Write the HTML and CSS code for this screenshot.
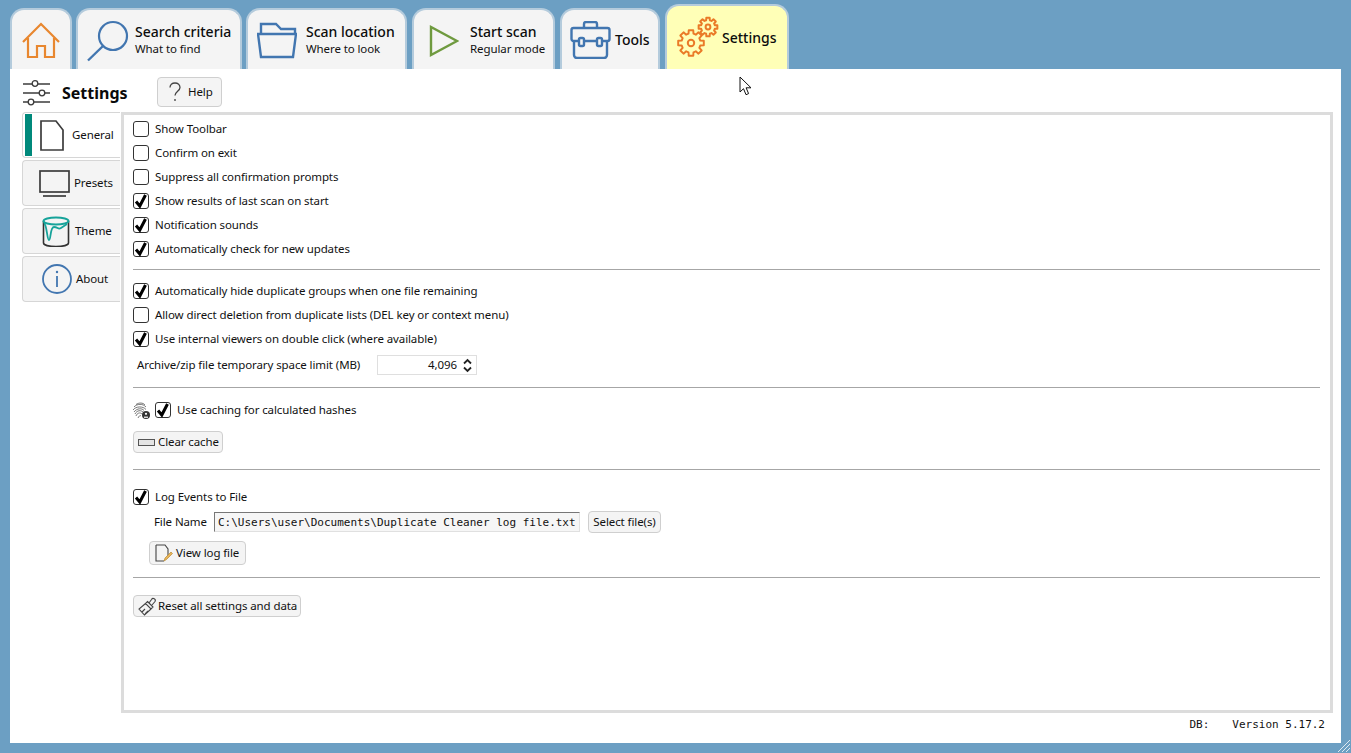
FILE: index.html
```html
<!DOCTYPE html>
<html lang="en">
<head>
<meta charset="utf-8">
<title>Settings</title>
<link rel="stylesheet" href="styles.css">
</head>
<body>
<div class="window">
  <nav class="tabbar">
    <div class="tab tab-home">
      <svg width="38" height="38" viewBox="0 0 38 38" fill="none" stroke="#e8872f" stroke-width="2.2"><path d="M1 20 19 2l18 18M6 16v19h9V24h8v11h9V16"/></svg>
    </div>
    <div class="tab tab-search">
      <svg width="42" height="42" viewBox="0 0 42 42" fill="none" stroke="#4276b0" stroke-width="2.2"><circle cx="26" cy="16" r="14"/><path d="M16 26 1 40.500" stroke-width="2.400"/></svg>
      <div class="tab-text"><b>Search criteria</b><span>What to find</span></div>
    </div>
    <div class="tab tab-scan">
      <svg width="40" height="37" viewBox="0 0 40 37" fill="none" stroke="#4276b0" stroke-width="2.4"><path d="M4 11V2h15l5 5h14v4M1 12h38l-3 23H4z"/></svg>
      <div class="tab-text"><b>Scan location</b><span>Where to look</span></div>
    </div>
    <div class="tab tab-start">
      <svg width="30" height="32" viewBox="0 0 30 32" fill="none" stroke="#6f9a3f" stroke-width="2.400"><path d="M2 2v28l26-14z"/></svg>
      <div class="tab-text"><b>Start scan</b><span>Regular mode</span></div>
    </div>
    <div class="tab tab-tools">
      <svg width="41" height="38" viewBox="0 0 41 38" fill="none" stroke="#4276b0" stroke-width="2.400" stroke-linejoin="round"><path d="M14 7V3a2 2 0 0 1 2-2h9a2 2 0 0 1 2 2v4"/><rect x="1.500" y="7" width="38" height="13" rx="2"/><path d="M4 20v14a3 3 0 0 0 3 3h27a3 3 0 0 0 3-3V20"/><rect x="9" y="17" width="5" height="8" rx="1.500" fill="#f4f4f4"/><rect x="27" y="17" width="5" height="8" rx="1.500" fill="#f4f4f4"/></svg>
      <b class="tab-label">Tools</b>
    </div>
    <div class="tab tab-settings">
      <svg width="42" height="41" viewBox="0 0 42 41" fill="none" stroke="#ea7a27" stroke-linejoin="round">
        <defs><path id="gear" d="M7.150-1.920 9.850-1.740 9.850 1.740 7.150 1.920 6.410 3.700 8.190 5.740 5.740 8.190 3.700 6.410 1.920 7.150 1.740 9.850-1.740 9.850-1.920 7.150-3.700 6.410-5.740 8.190-8.190 5.740-6.410 3.700-7.150 1.920-9.850 1.740-9.850-1.740-7.150-1.920-6.410-3.700-8.190-5.740-5.740-8.190-3.700-6.410-1.920-7.150-1.740-9.850 1.740-9.850 1.920-7.150 3.700-6.410 5.740-8.190 8.190-5.740 6.410-3.700Z"/></defs>
        <use href="#gear" transform="translate(14 27) scale(1.300)" stroke-width="1.500"/>
        <circle cx="14" cy="27" r="3.200" stroke-width="2"/>
        <use href="#gear" transform="translate(31 11) scale(.95)" stroke-width="2.100"/>
        <circle cx="31" cy="11" r="2.400" stroke-width="2"/>
      </svg>
      <b class="tab-label">Settings</b>
    </div>
  </nav>

  <main class="content">
    <header class="page-head">
      <svg class="head-icon" width="27" height="27" viewBox="0 0 27 27" fill="none" stroke="#3c3c3c" stroke-width="1.300"><path d="M0 5h27M0 14h27M0 23h27"/><circle cx="12" cy="4.500" r="2.800" fill="#fff"/><circle cx="19" cy="14" r="2.800" fill="#fff"/><circle cx="8" cy="23" r="2.800" fill="#fff"/></svg>
      <h1 class="page-title">Settings</h1>
      <button class="btn btn-help">
        <svg width="12" height="20" viewBox="0 0 12 20" fill="none" stroke="#444" stroke-width="1.300"><path d="M1 5.500C1 3 3 1 6 1s5 2 5 4.500c0 3.500-5 4-5 8"/><circle cx="6" cy="18" r=".9" fill="#444" stroke="none"/></svg>
        <span>Help</span>
      </button>
    </header>

    <div class="body">
      <aside class="side">
        <div class="side-tab active">
          <svg class="ic-general" width="24" height="31" viewBox="0 0 24 31" fill="none" stroke="#3c3c3c" stroke-width="1.700"><path d="M1 1h15l7 9v20H1z"/></svg>
          <span class="lbl-general">General</span>
        </div>
        <div class="side-tab">
          <svg class="ic-presets" width="31" height="27" viewBox="0 0 31 27" fill="none" stroke="#3c3c3c" stroke-width="1.700"><rect x="1" y="1" width="29" height="21"/><path d="M4 26h23"/></svg>
          <span class="lbl-presets">Presets</span>
        </div>
        <div class="side-tab">
          <svg class="ic-theme" width="28" height="31" viewBox="0 0 28 31" fill="none"><path d="M1.500 5v22c0 2 5.500 3.500 12.500 3.500s12.500-1.500 12.500-3.500V5" stroke="#333" stroke-width="1.600"/><ellipse cx="14" cy="5" rx="12.500" ry="3.500" stroke="#16a39a" stroke-width="2"/><path d="M2 7c3 2 3 17 5 17s1-13 5-13 4 3 7 1 6-4 6-4" stroke="#16a39a" stroke-width="1.800"/></svg>
          <span class="lbl-theme">Theme</span>
        </div>
        <div class="side-tab">
          <svg class="ic-about" width="30" height="30" viewBox="0 0 30 30" fill="none"><circle cx="15" cy="15" r="14" stroke="#4276b0" stroke-width="1.800"/><path d="M15 12v11" stroke="#4276b0" stroke-width="1.800"/><circle cx="15" cy="8" r="1.200" fill="#4276b0"/></svg>
          <span class="lbl-about">About</span>
        </div>
      </aside>

      <section class="panel">
        <label class="row"><span class="cb"></span>Show Toolbar</label>
        <label class="row"><span class="cb"></span>Confirm on exit</label>
        <label class="row"><span class="cb"></span>Suppress all confirmation prompts</label>
        <label class="row"><span class="cb on"><svg viewBox="0 0 16 16"><path d="M3 8.500 6.800 13 12.500 2"/></svg></span>Show results of last scan on start</label>
        <label class="row"><span class="cb on"><svg viewBox="0 0 16 16"><path d="M3 8.500 6.800 13 12.500 2"/></svg></span>Notification sounds</label>
        <label class="row"><span class="cb on"><svg viewBox="0 0 16 16"><path d="M3 8.500 6.800 13 12.500 2"/></svg></span>Automatically check for new updates</label>
        <hr class="sep sep-1">
        <label class="row"><span class="cb on"><svg viewBox="0 0 16 16"><path d="M3 8.500 6.800 13 12.500 2"/></svg></span>Automatically hide duplicate groups when one file remaining</label>
        <label class="row"><span class="cb"></span>Allow direct deletion from duplicate lists (DEL key or context menu)</label>
        <label class="row"><span class="cb on"><svg viewBox="0 0 16 16"><path d="M3 8.500 6.800 13 12.500 2"/></svg></span>Use internal viewers on double click (where available)</label>
        <div class="spin-row">
          <span class="spin-label">Archive/zip file temporary space limit (MB)</span>
          <div class="spin">
            <span class="spin-val">4,096</span>
            <svg width="9" height="15" viewBox="0 0 9 15" fill="none" stroke="#222" stroke-width="1.800"><path d="M1 5.500 4.500 2 8 5.500M1 9.500 4.500 13 8 9.500"/></svg>
          </div>
        </div>
        <hr class="sep sep-2">
        <label class="row row-cache">
          <svg class="fp" width="17" height="17" viewBox="0 0 17 17" fill="none" stroke="#555" stroke-width=".8"><path d="M3 2.500c3-2 7-2 9 .5M1 5c3-3.500 9-3.500 12 0M0 8c3-4 10-4 13-.5M1 10c3-4 8-4 10-1.500M2 12c2-4 6-4 8-2M3 14c1-3 4-4 6-2M5 16c1-2 2-3 3-2"/><circle cx="13" cy="13" r="4" fill="#333" stroke="none"/><circle cx="13" cy="11.800" r="1.100" fill="#fff" stroke="none"/><path d="M11 15.200h4" stroke="#fff" stroke-width="1.200"/></svg>
          <span class="cb on"><svg viewBox="0 0 16 16"><path d="M3 8.500 6.800 13 12.500 2"/></svg></span>Use caching for calculated hashes
        </label>
        <button class="btn btn-clear">
          <svg width="17" height="7" viewBox="0 0 17 7" fill="none" stroke="#555"><rect x=".5" y=".5" width="16" height="6" fill="#e4e4e4"/></svg>
          <span>Clear cache</span>
        </button>
        <hr class="sep sep-3">
        <label class="row row-log"><span class="cb on"><svg viewBox="0 0 16 16"><path d="M3 8.500 6.800 13 12.500 2"/></svg></span>Log Events to File</label>
        <div class="file-row">
          <span class="file-label">File Name</span>
          <div class="file-input">C:\Users\user\Documents\Duplicate Cleaner log file.txt</div>
          <button class="btn btn-select"><span>Select file(s)</span></button>
        </div>
        <button class="btn btn-view">
          <svg width="18" height="18" viewBox="0 0 18 18" fill="none"><path d="M1 1h9l3 4v7M9 17H1V1" stroke="#444" stroke-width="1.100"/><path d="M9 17l1-3 6-6 1.500 1.500-6 6z" fill="#e6b45a" stroke="#b98a35" stroke-width=".7"/></svg>
          <span>View log file</span>
        </button>
        <hr class="sep sep-4">
        <button class="btn btn-reset">
          <svg width="19" height="19" viewBox="0 0 19 19" fill="none" stroke="#444" stroke-width="1.100"><path d="M11 6l2.500-3.500a2 2 0 0 1 3.500 2L14 8M9.500 4.500l5.500 5.500-2 2L7.500 6.500zM7.500 6.500 1 12l5.500 6 6.500-6M4 15l3-3M7 17l3-3"/></svg>
          <span>Reset all settings and data</span>
        </button>
      </section>
    </div>

    <footer class="status">
      <span>DB:</span><span>Version 5.17.2</span>
    </footer>
  </main>

  <svg class="cursor" width="14" height="20" viewBox="0 0 14 20"><path d="M1 1v15l3.500-3.300 2.500 6 2.600-1.100-2.500-5.800H12z" fill="#fff" stroke="#111" stroke-width="1"/></svg>
  <svg class="grip" width="14" height="14" viewBox="0 0 14 14" stroke="#dfe9f1" stroke-width="1"><path d="M13 1 1 13M13 5 5 13M13 9 9 13"/></svg>
</div>
</body>
</html>
```

FILE: styles.css
```css
* { box-sizing: border-box; }
html, body { margin: 0; height: 100%; }
body {
  background: #6c9fc3;
  font-family: "Noto Sans", "Open Sans", sans-serif;
  font-size: 11.5px;
  letter-spacing: -0.1px;
  color: #111;
  overflow: hidden;
}
.window { position: relative; width: 1351px; height: 753px; padding: 0 10px 10px; display: flex; flex-direction: column; }

/* tabs */
.tabbar { display: flex; align-items: flex-end; gap: 4px; height: 69px; flex: none; }
.tab {
  height: 61px;
  display: flex;
  align-items: center;
  background: #f4f4f4;
  border: 2px solid #b4cbdc;
  border-bottom: 0;
  border-radius: 14px 14px 0 0;
}
.tab-home { width: 62px; justify-content: center; padding-top: 2px; }
.tab-search { width: 166px; padding-left: 9px; gap: 6px; padding-top: 2px; }
.tab-scan { width: 161px; padding-left: 9px; gap: 9px; padding-top: 2px; }
.tab-start { width: 143px; padding-left: 15px; gap: 11px; margin-left: 1px; padding-top: 2px; }
.tab-tools { width: 100px; padding-left: 8px; gap: 4px; margin-left: 1px; }
.tab-settings { width: 124px; height: 65px; margin-left: 1px; background: #ffffb7; padding-left: 10px; gap: 3px; padding-bottom: 2px; }
.tab-settings .tab-label { padding-top: 2px; }
.tab-text { display: flex; flex-direction: column; line-height: 17px; padding-bottom: 2px; }
.tab-text b, .tab-label { font-weight: 500; font-size: 14px; letter-spacing: 0; color: #0c0c0c; }
.tab-text span { font-size: 11.5px; }

/* content */
.content { flex: 1; background: #fff; display: flex; flex-direction: column; padding-left: 12px; min-height: 0; }
.page-head { height: 43px; display: flex; align-items: center; flex: none; padding-top: 3px; }
.head-icon { margin: 0 0 0 1px; }
.page-title { margin: 2px 0 0 12px; font-size: 16px; font-weight: 700; letter-spacing: 0; width: 95px; color: #0a0a0a; }
.btn {
  display: inline-flex;
  align-items: center;
  font: inherit;
  letter-spacing: inherit;
  white-space: nowrap;
  color: #111;
  background: #f4f4f4;
  border: 1px solid #cfcfcf;
  border-radius: 4px;
  padding: 0;
}
.btn span, .side-tab span, .spin-label, .spin-val, .file-label { padding-bottom: 2px; }
.btn-help { width: 65px; height: 30px; padding-left: 11px; gap: 7px; }

.body { flex: 1; display: flex; min-height: 0; }
.side { width: 99px; flex: none; display: flex; flex-direction: column; gap: 2px; }
.side-tab {
  height: 46px;
  width: 98px;
  display: flex;
  align-items: center;
  background: #f4f4f4;
  border: 1px solid #d6d6d6;
  border-right: 0;
  border-radius: 4px 0 0 4px;
}
.side-tab.active { background: #fff; }
.side-tab.active::before { content: ""; flex: none; align-self: stretch; width: 7px; margin: 1px 0 1px 2px; background: #00897b; }
.ic-general { margin-left: 8px; }
.lbl-general { margin-left: 8px; }
.ic-presets { margin-left: 16px; }
.lbl-presets { margin-left: 4px; }
.ic-theme { margin-left: 19px; }
.lbl-theme { margin-left: 5px; }
.ic-about { margin-left: 19px; }
.lbl-about { margin-left: 4px; }

.panel {
  width: 1212px;
  height: 601px;
  flex: none;
  border: 3px solid #dcdcdc;
  padding: 2px 9px 0 9px;
  display: flex;
  flex-direction: column;
  align-items: flex-start;
}
.row { display: flex; align-items: center; height: 24px; flex: none; padding-bottom: 2px; }
.cb {
  width: 16px; height: 16px;
  border: 1.500px solid #333;
  border-radius: 3px;
  background: #fff;
  margin: 2px 6px 0 0;
  flex: none;
}
.row-cache .fp { margin: 2px 5px 0 0; flex: none; }
.cb svg { display: block; width: 16px; height: 16px; margin: -1.500px; fill: none; stroke: #000; stroke-width: 3; }
.sep { width: 1187px; height: 1px; border: 0; background: #a6a6a6; margin: 0; flex: none; }
.sep-1 { margin: 8px 0 9px; }
.spin-row { display: flex; align-items: center; height: 20px; margin-top: 4px; padding-left: 4px; flex: none; }
.spin-label { width: 240px; }
.spin { width: 100px; height: 20px; border: 1px solid #dfdfdf; display: flex; align-items: center; justify-content: flex-end; padding-right: 4px; gap: 6px; }
.sep-2 { margin: 12px 0 10px; }
.btn-clear { width: 90px; height: 22px; margin-top: 9px; padding-left: 4px; gap: 3px; flex: none; }
.sep-3 { margin: 16px 0 15px; }
.file-row { display: flex; align-items: center; height: 22px; margin-top: 2px; padding-left: 21px; flex: none; }
.file-label { width: 60px; }
.file-input {
  width: 366px; height: 20px;
  background: #f6f6f6;
  border: 1px solid #e0e0e0;
  border-top-color: #777; border-left-color: #777;
  font-family: "DejaVu Sans Mono", monospace;
  font-size: 11px;
  letter-spacing: 0;
  line-height: 19px;
  padding-left: 3px;
  white-space: nowrap;
  overflow: hidden;
}
.btn-select { width: 73px; height: 22px; margin-left: 8px; justify-content: center; }
.btn-view { width: 97px; height: 24px; margin: 8px 0 0 16px; padding-left: 5px; gap: 3px; flex: none; }
.sep-4 { margin: 12px 0 17px; }
.btn-reset { width: 168px; height: 22px; padding-left: 4px; gap: 1px; flex: none; }

.status {
  height: 30px;
  flex: none;
  display: flex;
  justify-content: flex-end;
  align-items: center;
  gap: 23px;
  padding: 0 16px 8px 0;
  font-family: "DejaVu Sans Mono", monospace;
  font-size: 11px;
  letter-spacing: 0;
}

.cursor { position: absolute; left: 739px; top: 76px; }
.grip { position: absolute; right: 0; bottom: 0; }
```
